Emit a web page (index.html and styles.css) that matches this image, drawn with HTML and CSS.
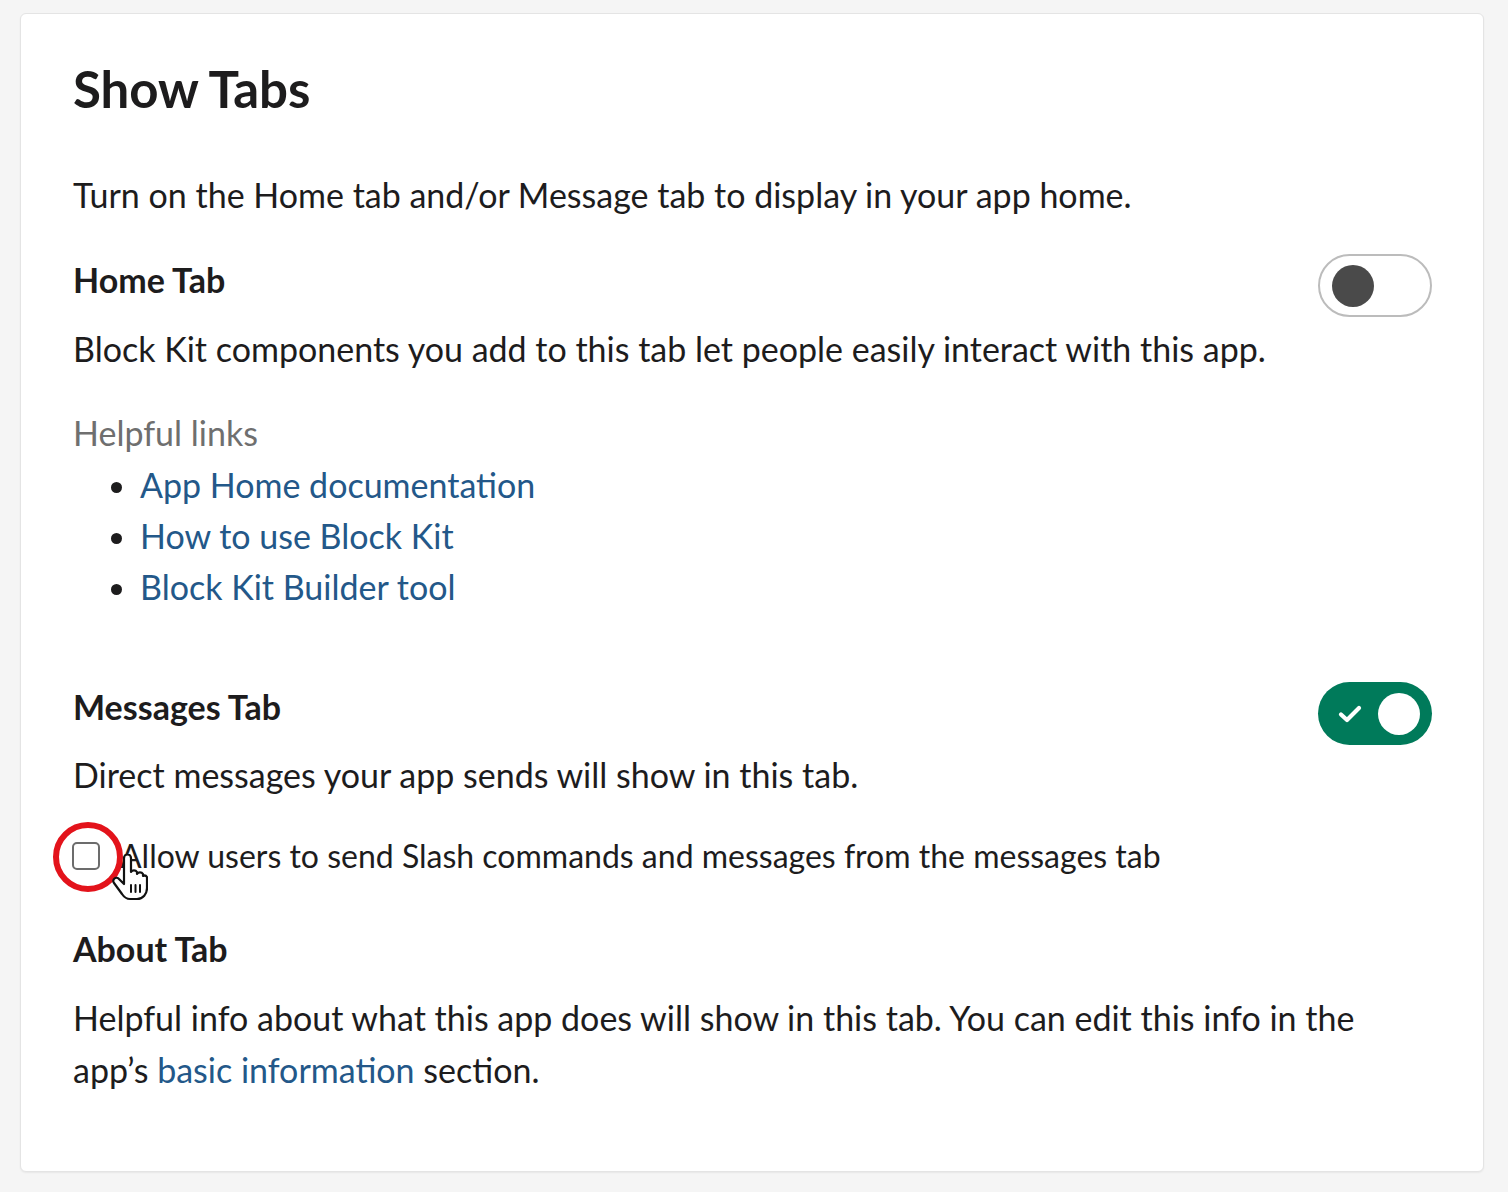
FILE: index.html
```html
<!DOCTYPE html>
<html lang="en">
<head>
<meta charset="utf-8">
<title>Show Tabs</title>
<link rel="stylesheet" href="styles.css">
</head>
<body>
<div class="card">
  <h1 class="title">Show Tabs</h1>
  <p class="intro">Turn on the Home tab and/or Message tab to display in your app home.</p>

  <div class="tab-row home-row">
    <h2 class="tab-title">Home Tab</h2>
    <span class="toggle toggle-off" role="switch" aria-checked="false"><span class="knob"></span></span>
  </div>
  <p class="desc home-desc">Block Kit components you add to this tab let people easily interact with this app.</p>

  <p class="links-label">Helpful links</p>
  <ul class="links">
    <li><a href="#">App Home documentation</a></li>
    <li><a href="#">How to use Block Kit</a></li>
    <li><a href="#">Block Kit Builder tool</a></li>
  </ul>

  <div class="tab-row msg-row">
    <h2 class="tab-title">Messages Tab</h2>
    <span class="toggle toggle-on" role="switch" aria-checked="true">
      <svg class="check" viewBox="0 0 24 18" width="24" height="18"><path d="M3 9.5 L9 15 L21 3" fill="none" stroke="#fff" stroke-width="4.2" stroke-linecap="round" stroke-linejoin="round"/></svg>
      <span class="knob"></span>
    </span>
  </div>
  <p class="desc msg-desc">Direct messages your app sends will show in this tab.</p>

  <label class="check-row">
    <span class="checkbox"></span>
    <span class="check-label">Allow users to send Slash commands and messages from the messages tab</span>
    <span class="highlight"></span>
    <svg class="cursor" viewBox="0 0 36 48" width="36" height="48">
      <path d="M12 4 a3.5 3.5 0 0 1 7 0 v14 a3.5 3.5 0 0 1 6 0 v2 a3.5 3.5 0 0 1 6 0 v2 a3 3 0 0 1 4 1 v11 c0 6 -4 11 -10 11 h-7 c-4 0 -6 -2 -8 -5 l-8 -11 a3.2 3.2 0 0 1 5 -4 l5 5 z" fill="#fff" stroke="#111" stroke-width="2.2" stroke-linejoin="round"/>
      <path d="M19 31 v7 M23.5 31 v7 M28 31 v7" stroke="#111" stroke-width="2" stroke-linecap="round"/>
    </svg>
  </label>

  <h2 class="tab-title about-title">About Tab</h2>
  <p class="about">Helpful info about what this app does will show in this tab. You can edit this info in the<br>app’s <a href="#">basic information</a> section.</p>
</div>
</body>
</html>
```

FILE: styles.css
```css
* { box-sizing: border-box; }

html, body {
  margin: 0;
  padding: 0;
  background: #f5f5f5;
}

body {
  padding: 13px 24px 20px 20px;
  font-family: Lato, "Noto Sans", sans-serif;
  color: #1d1c1d;
}

.card {
  background: #fff;
  border: 1px solid #e4e4e4;
  border-radius: 6px;
  box-shadow: 0 1px 2px rgba(0,0,0,0.06);
  padding: 45px 51px 70px 52px;
  min-height: 1159px;
}

.title {
  margin: 0;
  font-size: 51px;
  line-height: 60px;
  font-weight: 700;
  letter-spacing: -0.1px;
}

.intro {
  margin: 50px 0 0;
  font-size: 34px;
  line-height: 52px;
}

.tab-row {
  display: flex;
  justify-content: space-between;
  align-items: flex-start;
}

.home-row { margin-top: 33px; }
.msg-row { margin-top: 70px; }

.tab-title {
  margin: 6px 0 0;
  font-size: 34px;
  line-height: 40px;
  font-weight: 700;
}

.msg-row .tab-title { margin-top: 5px; }

.toggle {
  position: relative;
  display: flex;
  align-items: center;
  width: 114px;
  height: 63px;
  border-radius: 32px;
  flex-shrink: 0;
}

.toggle-off {
  background: #fff;
  border: 2px solid #bcbcbc;
}

.toggle-off .knob {
  width: 42px;
  height: 42px;
  border-radius: 50%;
  background: #4a4a4a;
  margin-left: 12px;
}

.toggle-on {
  background: #007a5a;
  justify-content: space-between;
  padding: 0 12px 0 20px;
}

.toggle-on .knob {
  width: 42px;
  height: 42px;
  border-radius: 50%;
  background: #fff;
}

.check { display: block; }

.desc {
  margin: 6px 0 0;
  font-size: 34px;
  line-height: 52px;
}

.msg-desc { margin-top: 4px; }

.links-label {
  margin: 32px 0 0;
  font-size: 34px;
  line-height: 52px;
  color: #6f6f6f;
}

.links {
  margin: 0;
  padding-left: 67px;
  font-size: 34px;
  line-height: 51px;
}

.links li::marker { color: #1d1c1d; }

a {
  color: #235889;
  text-decoration: none;
}

.check-row {
  position: relative;
  display: flex;
  align-items: center;
  gap: 20px;
  margin-top: 29px;
  font-size: 32px;
  line-height: 52px;
}

.checkbox {
  width: 28px;
  height: 28px;
  border: 2px solid #6c6c6c;
  border-radius: 5px;
  background: #fff;
  flex-shrink: 0;
  margin-left: -1px;
}

.check-label { color: #1d1c1d; }

.highlight {
  position: absolute;
  left: -20px;
  top: -8px;
  width: 70px;
  height: 70px;
  border: 6px solid #e3131b;
  border-radius: 50%;
}

.cursor {
  position: absolute;
  left: 39px;
  top: 24px;
}

.about-title {
  margin-top: 47px;
}

.about {
  margin: 23px 0 0;
  font-size: 34px;
  line-height: 52px;
}
```
